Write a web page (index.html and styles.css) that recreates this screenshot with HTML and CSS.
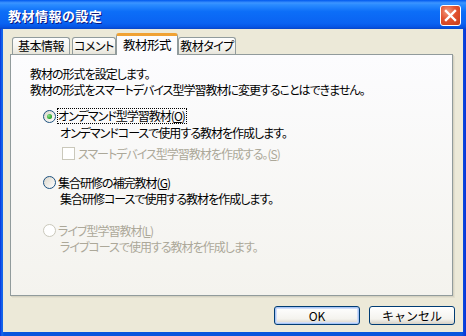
FILE: index.html
```html
<!DOCTYPE html>
<html lang="ja">
<head>
    <meta charset="UTF-8">
    <title>教材情報の設定</title>
    <link rel="stylesheet" href="styles.css">
</head>
<body>
    <div class="window">
        <div class="titlebar">
            <span class="title">教材情報の設定</span>
            <span class="close-btn">
                <svg width="13" height="13" viewBox="0 0 13 13">
                    <path d="M2 2 L11 11 M11 2 L2 11" stroke="#fff" stroke-width="2.4" stroke-linecap="square"/>
                </svg>
            </span>
        </div>
        <div class="dialog-body">
            <div class="tabs">
                <div class="tab tab-1">基本情報</div>
                <div class="tab tab-2">コメント</div>
                <div class="tab tab-3 active">教材形式</div>
                <div class="tab tab-4">教材タイプ</div>
            </div>
            <div class="panel">
                <p class="line">教材の形式を設定します。</p>
                <p class="line">教材の形式をスマートデバイス型学習教材に変更することはできません。</p>

                <div class="option opt-1">
                    <span class="radio checked"></span>
                    <span class="label focus">オンデマンド型学習教材(<u>O</u>)</span>
                </div>
                <p class="desc">オンデマンドコースで使用する教材を作成します。</p>
                <div class="option sub disabled">
                    <span class="check"></span>
                    <span class="label">スマートデバイス型学習教材を作成する。(<u>S</u>)</span>
                </div>

                <div class="option opt-2">
                    <span class="radio"></span>
                    <span class="label">集合研修の補完教材(<u>G</u>)</span>
                </div>
                <p class="desc">集合研修コースで使用する教材を作成します。</p>

                <div class="option opt-3 disabled">
                    <span class="radio"></span>
                    <span class="label">ライブ型学習教材(<u>L</u>)</span>
                </div>
                <p class="desc disabled">ライブコースで使用する教材を作成します。</p>
            </div>
            <div class="buttons">
                <button class="btn default">OK</button>
                <button class="btn">キャンセル</button>
            </div>
        </div>
    </div>
</body>
</html>
```

FILE: styles.css
```css
html, body {
    margin: 0;
    padding: 0;
}

body {
    width: 466px;
    height: 336px;
    overflow: hidden;
    font-family: "Noto Sans CJK JP", "Liberation Sans", sans-serif;
    font-size: 12px;
    font-feature-settings: "palt";
    color: #000;
}

.window {
    width: 466px;
    height: 336px;
    display: flex;
    flex-direction: column;
    background: linear-gradient(to right, #0831d9 0, #166aee 2px, #0855dd 4px, #0855dd 462px, #0831d9 466px);
    box-sizing: border-box;
}

/* title bar */
.titlebar {
    height: 29px;
    display: flex;
    align-items: center;
    justify-content: space-between;
    padding: 0 5px 0 8px;
    background: linear-gradient(to bottom, #0058ee 0%, #3d95ff 10%, #2b8cff 16%, #0c6ef8 40%, #0a63f2 80%, #0656e6 92%, #0846c8 100%);
}

.title {
    color: #fff;
    font-weight: bold;
    font-size: 13px;
    letter-spacing: 0.5px;
    text-shadow: 1px 1px 0 #0a1883;
    margin-top: 1px;
}

.close-btn {
    width: 19px;
    height: 19px;
    display: flex;
    align-items: center;
    justify-content: center;
    border: 1px solid #fff;
    border-radius: 3px;
    background: radial-gradient(circle at 35% 30%, #f39b7f 0%, #e2522f 45%, #c83c18 100%);
    margin-top: 1px;
}

/* body */
.dialog-body {
    flex: 1;
    display: flex;
    flex-direction: column;
    margin: 0 3px 4px 3px;
    padding: 5px 8px 7px 7px;
    background: #ece9d8;
}

.tabs {
    display: flex;
    align-items: flex-end;
    padding-left: 2px;
    height: 20px;
    position: relative;
    z-index: 1;
}

.tab {
    height: 16px;
    line-height: 16px;
    text-align: center;
    white-space: nowrap;
    letter-spacing: -0.5px;
    border: 1px solid #919b9c;
    border-bottom: none;
    border-radius: 3px 3px 0 0;
    background: linear-gradient(to bottom, #fefefe, #f4f3ee 60%, #e6e4da);
    box-sizing: content-box;
}

.tab-1 { width: 56px; margin-right: 2px; }
.tab-2 { width: 42px; }
.tab-3 { width: 60px; }
.tab-4 { width: 56px; }

.tab.active {
    height: 18px;
    line-height: 18px;
    border-top: 3px solid #f0a234;
    border-radius: 3px 3px 0 0;
    background: #fcfcfe;
    margin-bottom: -1px;
    padding-bottom: 1px;
    font-size: 12.5px;
}

.panel {
    flex: 1;
    border: 1px solid #919b9c;
    box-shadow: 1px 1px 0 #d6d3c2, 2px 2px 0 #e2dfcf;
    background: linear-gradient(to bottom, #fcfcfe, #f4f3ee);
    padding: 11px 0 0 19px;
    margin-right: 2px;
    letter-spacing: -1px;
}

.line {
    margin: 0;
    line-height: 16px;
}

.option {
    display: flex;
    align-items: center;
    height: 16px;
    margin-left: 13px;
}

.opt-1 { margin-top: 10px; }
.opt-2 { margin-top: 13px; }
.opt-3 { margin-top: 15px; }

.option.sub {
    margin-left: 32px;
    margin-top: 4px;
}

.radio {
    width: 11px;
    height: 11px;
    border: 1px solid #1c5180;
    border-radius: 50%;
    background: linear-gradient(135deg, #dcd7cb, #fff);
    margin-right: 2px;
    display: flex;
    align-items: center;
    justify-content: center;
}

.radio.checked::after {
    content: "";
    width: 5px;
    height: 5px;
    border-radius: 50%;
    background: radial-gradient(circle at 35% 35%, #8fe08f, #21a121 70%);
}

.check {
    width: 11px;
    height: 11px;
    border: 1px solid #cac8bb;
    background: #fff;
    margin-right: 3px;
}

.label.focus {
    outline: 1px dotted #000;
    outline-offset: 0;
    line-height: 14px;
    padding-right: 1px;
}

.desc {
    margin: 1px 0 0 30px;
    line-height: 16px;
}

.disabled,
.disabled .label {
    color: #aca899;
}

.disabled .radio {
    border-color: #cac8bb;
    background: #fff;
}

/* buttons */
.buttons {
    display: flex;
    justify-content: flex-end;
    gap: 9px;
    margin-top: 10px;
}

.btn {
    width: 86px;
    height: 19px;
    padding: 0;
    font-family: inherit;
    font-size: 12px;
    line-height: 15px;
    border: 1px solid #003c74;
    border-radius: 3px;
    background: linear-gradient(to bottom, #fff, #f4f3ee 70%, #d6d0c5);
    color: #000;
}

.btn.default {
    box-shadow: inset 0 0 0 1px #a9c6f6, inset 0 0 0 2px #d0ddf8;
}
```
